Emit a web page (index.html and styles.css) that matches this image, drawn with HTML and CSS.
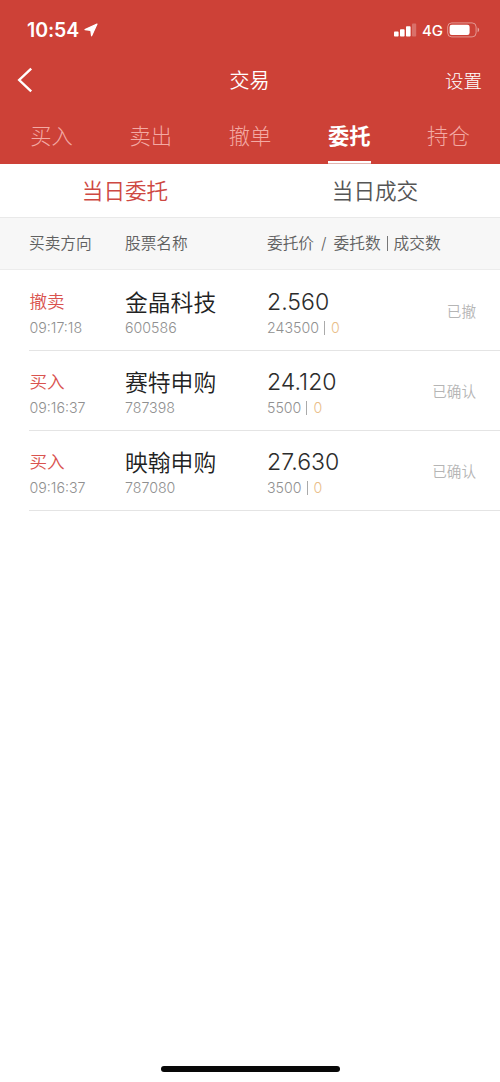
FILE: index.html
```html
<!DOCTYPE html>
<html lang="zh-CN">
<head>
<meta charset="utf-8">
<title>交易</title>
<link rel="stylesheet" href="styles.css">
</head>
<body>
<div class="screen">
  <header class="top">
    <div class="status">
      <div class="status-left">
        <span class="clock">10:54</span>
        <svg class="locate" width="14" height="14" viewBox="0 0 14 14"><path d="M13 1 L7.6 12.8 L6.8 7.4 L1 6.6 Z" fill="#fff" stroke="#fff" stroke-width="1.2" stroke-linejoin="round"/></svg>
      </div>
      <div class="status-right">
        <svg width="23" height="14" viewBox="0 0 23 14" fill="#fff"><rect x="0" y="8.6" width="4.6" height="5" rx=".8"/><rect x="6" y="6.2" width="4.6" height="7.4" rx=".8"/><rect x="12" y="3.2" width="4.6" height="10.4" rx=".8"/><rect x="18" y=".6" width="4.2" height="13" rx=".8" opacity=".25"/></svg>
        <span class="network">4G</span>
        <svg width="33" height="16" viewBox="0 0 33 16"><rect x=".7" y=".9" width="28.4" height="14" rx="4" fill="none" stroke="#fff" stroke-opacity=".45"/><rect x="2.6" y="2.8" width="20" height="10.2" rx="2.2" fill="#fff"/><path d="M30.6 5.6c2 .8 2 3.8 0 4.6z" fill="#fff" opacity=".5"/></svg>
      </div>
    </div>
    <div class="nav">
      <svg class="back" width="16" height="26" viewBox="0 0 16 26"><path d="M14.2 1.7 L2.2 13 L14.2 24.3" fill="none" stroke="#fff" stroke-width="2.4"/></svg>
      <h1 class="title">交易</h1>
      <span class="settings">设置</span>
    </div>
    <nav class="tabs">
      <span class="tab">买入</span>
      <span class="tab">卖出</span>
      <span class="tab">撤单</span>
      <span class="tab tab-active">委托</span>
      <span class="tab">持仓</span>
    </nav>
  </header>
  <div class="subtabs">
    <span class="subtab subtab-active">当日委托</span>
    <span class="subtab">当日成交</span>
  </div>
  <div class="columns">
    <span>买卖方向</span>
    <span>股票名称</span>
    <span class="column-wide">委托价<i class="slash">/</i>委托数<i class="bar"></i>成交数</span>
  </div>
  <main class="orders">
    <div class="order">
      <div><div class="side">撤卖</div><div class="sub">09:17:18</div></div>
      <div><div class="name">金晶科技</div><div class="sub">600586</div></div>
      <div><div class="price">2.560</div><div class="sub">243500<i class="divider"></i><b class="filled">0</b></div></div>
      <div class="state">已撤</div>
    </div>
    <div class="order">
      <div><div class="side">买入</div><div class="sub">09:16:37</div></div>
      <div><div class="name">赛特申购</div><div class="sub">787398</div></div>
      <div><div class="price">24.120</div><div class="sub">5500<i class="divider"></i><b class="filled">0</b></div></div>
      <div class="state">已确认</div>
    </div>
    <div class="order">
      <div><div class="side">买入</div><div class="sub">09:16:37</div></div>
      <div><div class="name">映翰申购</div><div class="sub">787080</div></div>
      <div><div class="price">27.630</div><div class="sub">3500<i class="divider"></i><b class="filled">0</b></div></div>
      <div class="state">已确认</div>
    </div>
  </main>
  <div class="home"></div>
</div>
</body>
</html>
```
FILE: styles.css
```css
* { box-sizing: border-box; }
body {
  margin: 0;
  background: #fff;
  font-family: Inter, "Noto Sans CJK SC", sans-serif;
}
i, b { font-style: normal; font-weight: inherit; }
.screen {
  display: flex;
  flex-direction: column;
  width: 500px;
  height: 1082px;
  overflow: hidden;
}
.top {
  height: 164px;
  background: #cd4137;
  color: #fff;
}
.status {
  display: flex;
  justify-content: space-between;
  height: 60px;
  padding: 0 20px 0 27px;
}
.status-left, .status-right {
  display: flex;
  align-items: center;
}
.clock {
  font-size: 19.5px;
  font-weight: 600;
  letter-spacing: -.1px;
}
.locate { margin-left: 5px; }
.network {
  margin: 0 4px 0 5px;
  font-size: 15px;
  font-weight: 500;
}
.nav {
  display: grid;
  grid-template-columns: 1fr auto 1fr;
  align-items: center;
  height: 40px;
  padding: 0 18px 0 17px;
}
.title {
  margin: 0;
  padding-top: 2px;
  font-size: 20px;
  line-height: 30px;
  font-weight: 350;
}
.settings {
  justify-self: end;
  padding-top: 1px;
  font-size: 18.5px;
  line-height: 30px;
  font-weight: 300;
}
.tabs {
  display: flex;
  height: 64px;
  padding: 0 2px;
}
.tab {
  display: flex;
  flex-direction: column;
  align-items: center;
  flex: 1;
  padding-top: 16px;
  font-size: 21.3px;
  line-height: 40px;
  font-weight: 300;
  color: #f3aaa4;
}
.tab-active {
  font-weight: 700;
  color: #fff;
}
.tab-active::after {
  content: "";
  width: 43px;
  height: 3px;
  margin-top: 5px;
  border-bottom: 1px solid #e3b5b0;
  background: #fff;
}
.subtabs {
  display: flex;
  height: 54px;
  border-bottom: 1px solid #e9e9e9;
}
.subtab {
  flex: 1;
  padding-top: 1px;
  text-align: center;
  font-size: 21.6px;
  line-height: 53px;
  font-weight: 350;
  color: #555;
}
.subtab-active { color: #ce4842; }
.columns, .order {
  display: grid;
  grid-template-columns: 96px 142px 1fr auto;
}
.columns {
  height: 52px;
  padding-left: 29px;
  border-bottom: 1px solid #ececec;
  background: #f7f7f7;
  font-size: 15.7px;
  line-height: 52px;
  font-weight: 350;
  color: #606060;
}
.slash { margin: 0 7px; }
.bar {
  display: inline-block;
  width: 1px;
  height: 15px;
  margin: 0 6px;
  background: #777;
  vertical-align: -2px;
}
.orders { padding-top: 1px; }
.order {
  height: 80px;
  margin-left: 29px;
  padding: 14px 24px 0 0;
  border-bottom: 1px solid #e4e4e4;
}
.order > div:first-child { padding-left: .5px; }
.side, .name, .price {
  height: 35px;
  line-height: 36px;
  font-weight: 350;
}
.side {
  font-size: 17.6px;
  line-height: 34px;
  color: #d9534f;
}
.name {
  font-size: 22.8px;
  color: #222;
}
.price {
  font-size: 23.1px;
  line-height: 34px;
  color: #2c2c2c;
}
.sub {
  display: flex;
  align-items: center;
  height: 16px;
  font-size: 14.2px;
  line-height: 16px;
  font-weight: 350;
  color: #909090;
}
.divider {
  width: 1px;
  height: 14px;
  margin: 0 6px 0 5px;
  background: #aaa;
}
.filled { color: #e9bd88; }
.state {
  padding-top: 16px;
  font-size: 14.6px;
  line-height: 22px;
  font-weight: 350;
  color: #b5b5b5;
}
.home {
  align-self: center;
  width: 179px;
  height: 6px;
  margin-top: auto;
  margin-bottom: 10px;
  border-radius: 3px;
  background: #080808;
}
```
